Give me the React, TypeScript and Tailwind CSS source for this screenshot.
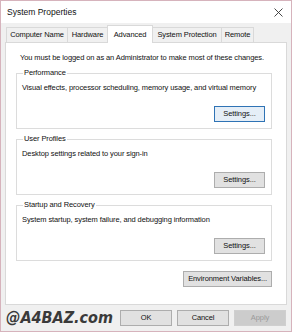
const font = { fontFamily: '"Liberation Sans", Arial, sans-serif' };

const tabs = [
  { label: "Computer Name", w: "w-[62px]" },
  { label: "Hardware", w: "w-[41px]" },
  { label: "Advanced", w: "w-[46px]" },
  { label: "System Protection", w: "w-[70px]" },
  { label: "Remote", w: "w-[33px]" },
];

const groups = [
  { title: "Performance", text: "Visual effects, processor scheduling, memory usage, and virtual memory", focused: true },
  { title: "User Profiles", text: "Desktop settings related to your sign-in", focused: false },
  { title: "Startup and Recovery", text: "System startup, system failure, and debugging information", focused: false },
];

function Button({ label, focused, disabled, className }: { label: string; focused?: boolean; disabled?: boolean; className?: string }) {
  return (
    <button
      className={
        "flex h-[16px] items-center justify-center whitespace-nowrap border text-[7.5px] leading-none tracking-[-0.1px] " +
        (focused
          ? "border-[#2f73b5] bg-[#e5eef7] text-[#111]"
          : disabled
            ? "border-[#cfcfcf] bg-[#cccccc] text-[#9a9a9a]"
            : "border-[#adadad] bg-[#e1e1e1] text-[#111]") +
        " " +
        (className ?? "")
      }
    >
      {label}
    </button>
  );
}

function GroupBox({ title, text, focused }: { title: string; text: string; focused: boolean }) {
  return (
    <fieldset className="ml-[10px] mr-[14px] border border-[#dcdcdc] px-[5px] pb-[6px]">
      <legend className="ml-[1px] whitespace-nowrap px-[1px] text-[7.5px] leading-[10px] tracking-[-0.1px] text-[#111]">{title}</legend>
      <p className="mt-[5px] whitespace-nowrap text-[7.5px] leading-[10px] tracking-[-0.1px] text-[#111]">{text}</p>
      <div className="mt-[13px] flex justify-end pr-[1px]">
        <Button label="Settings..." focused={focused} className="w-[51px]" />
      </div>
    </fieldset>
  );
}

export default function App() {
  return (
    <div style={font} className="flex h-[332px] w-[292px] flex-col border border-[#d6b3bc] bg-[#f0f0f0]">
      <div className="flex h-[22px] items-center justify-between bg-white pl-[6px] pr-[7px]">
        <span className="text-[8.5px] text-[#111]">System Properties</span>
        <svg width="9" height="9" viewBox="0 0 9 9" className="mr-[1px]">
          <path d="M0.5 0.5 L8.5 8.5 M8.5 0.5 L0.5 8.5" stroke="#333" strokeWidth="0.9" fill="none" />
        </svg>
      </div>
      <div className="flex flex-1 flex-col px-[4px] pt-[2px]">
        <div className="flex h-[17px] items-end pl-[2px]">
          {tabs.map((t) =>
            t.label === "Advanced" ? (
              <div
                key={t.label}
                className={
                  "relative z-10 -mb-[1px] -ml-[1px] flex h-[18px] items-center justify-center whitespace-nowrap border border-b-0 border-[#d9d9d9] bg-white text-[7.5px] tracking-[-0.1px] text-[#111] " +
                  t.w
                }
              >
                {t.label}
              </div>
            ) : (
              <div
                key={t.label}
                className={
                  "-ml-[1px] flex h-[15px] items-center justify-center whitespace-nowrap border border-b-0 border-[#d9d9d9] bg-[#f0f0f0] text-[7.5px] tracking-[-0.1px] text-[#111] " +
                  t.w
                }
              >
                {t.label}
              </div>
            )
          )}
        </div>
        <div className="flex h-[263px] flex-col border border-[#d9d9d9] bg-white pt-[10px]">
          <p className="whitespace-nowrap pl-[14px] text-[7.5px] leading-[10px] tracking-[-0.1px] text-[#111]">
            You must be logged on as an Administrator to make most of these changes.
          </p>
          <div className="mt-[5px] flex flex-col gap-[5px]">
            {groups.map((g) => (
              <GroupBox key={g.title} {...g} />
            ))}
          </div>
          <div className="mr-[14px] mt-[10px] flex justify-end">
            <Button label="Environment Variables..." className="w-[89px]" />
          </div>
        </div>
        <div className="flex flex-1 items-center justify-between pb-[1px]">
          <span
            className="pl-[1px] text-[16px] font-bold italic leading-none text-[#3a3a3a]"
            style={{ fontFamily: '"DejaVu Sans Condensed", "DejaVu Sans", sans-serif', fontStretch: "condensed" }}
          >
            @A4BAZ.com
          </span>
          <div className="flex gap-[5px] pr-[1px]">
            <Button label="OK" className="w-[52px]" />
            <Button label="Cancel" className="w-[52px]" />
            <Button label="Apply" disabled className="w-[52px]" />
          </div>
        </div>
      </div>
    </div>
  );
}
